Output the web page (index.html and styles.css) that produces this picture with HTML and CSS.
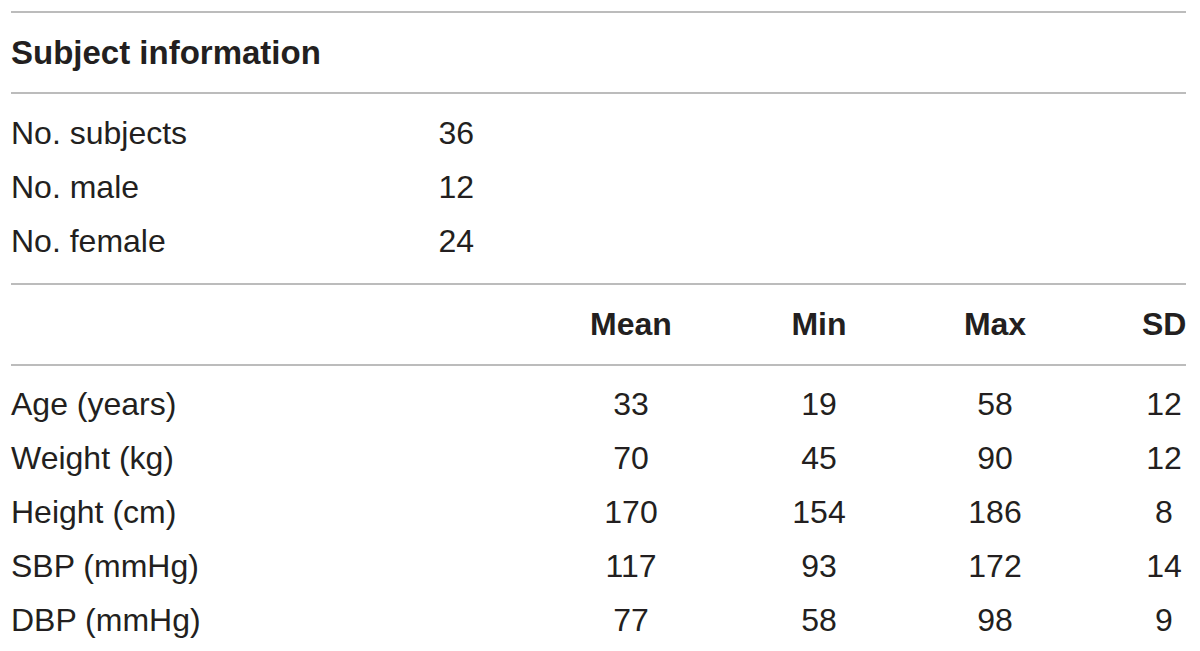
FILE: index.html
```html
<!DOCTYPE html>
<html lang="en">
<head>
<meta charset="utf-8">
<title>Subject information</title>
<link rel="stylesheet" href="styles.css">
</head>
<body>
<div class="table">
  <div class="title">Subject information</div>
  <div class="info">
    <div class="label">No. subjects</div><div class="val">36</div>
    <div class="label">No. male</div><div class="val">12</div>
    <div class="label">No. female</div><div class="val">24</div>
  </div>
  <div class="head">
    <div></div>
    <div class="num">Mean</div>
    <div class="num">Min</div>
    <div class="num">Max</div>
    <div class="num sd">SD</div>
  </div>
  <div class="stats">
    <div class="label">Age (years)</div><div class="num">33</div><div class="num">19</div><div class="num">58</div><div class="num sd">12</div>
    <div class="label">Weight (kg)</div><div class="num">70</div><div class="num">45</div><div class="num">90</div><div class="num sd">12</div>
    <div class="label">Height (cm)</div><div class="num">170</div><div class="num">154</div><div class="num">186</div><div class="num sd">8</div>
    <div class="label">SBP (mmHg)</div><div class="num">117</div><div class="num">93</div><div class="num">172</div><div class="num sd">14</div>
    <div class="label">DBP (mmHg)</div><div class="num">77</div><div class="num">58</div><div class="num">98</div><div class="num sd">9</div>
  </div>
</div>
</body>
</html>
```
FILE: styles.css
```css
html, body {
  margin: 0;
  padding: 0;
  background: #ffffff;
}
body {
  font-family: "Liberation Sans", Arial, sans-serif;
  color: #231f20;
  overflow: hidden;
}
.table {
  margin: 11px 14px 0 11px;
}
.title {
  border-top: 2px solid #bcbcbc;
  height: 79px;
  line-height: 79px;
  font-size: 33px;
  font-weight: bold;
}
.info {
  border-top: 2px solid #bcbcbc;
  padding: 12px 0 15px;
  display: grid;
  grid-template-columns: 380px 83px;
  grid-auto-rows: 54px;
  font-size: 32px;
  line-height: 54px;
}
.info .val {
  text-align: right;
}
.head {
  border-top: 2px solid #bcbcbc;
  height: 79px;
  line-height: 79px;
  display: grid;
  grid-template-columns: 529px 182px 194px 158px 1fr;
  font-size: 32px;
  font-weight: bold;
}
.stats {
  border-top: 2px solid #bcbcbc;
  padding-top: 11px;
  display: grid;
  grid-template-columns: 529px 182px 194px 158px 1fr;
  grid-auto-rows: 54px;
  font-size: 32px;
  line-height: 54px;
}
.num {
  text-align: center;
}
.sd {
  padding-left: 68px;
}
```
